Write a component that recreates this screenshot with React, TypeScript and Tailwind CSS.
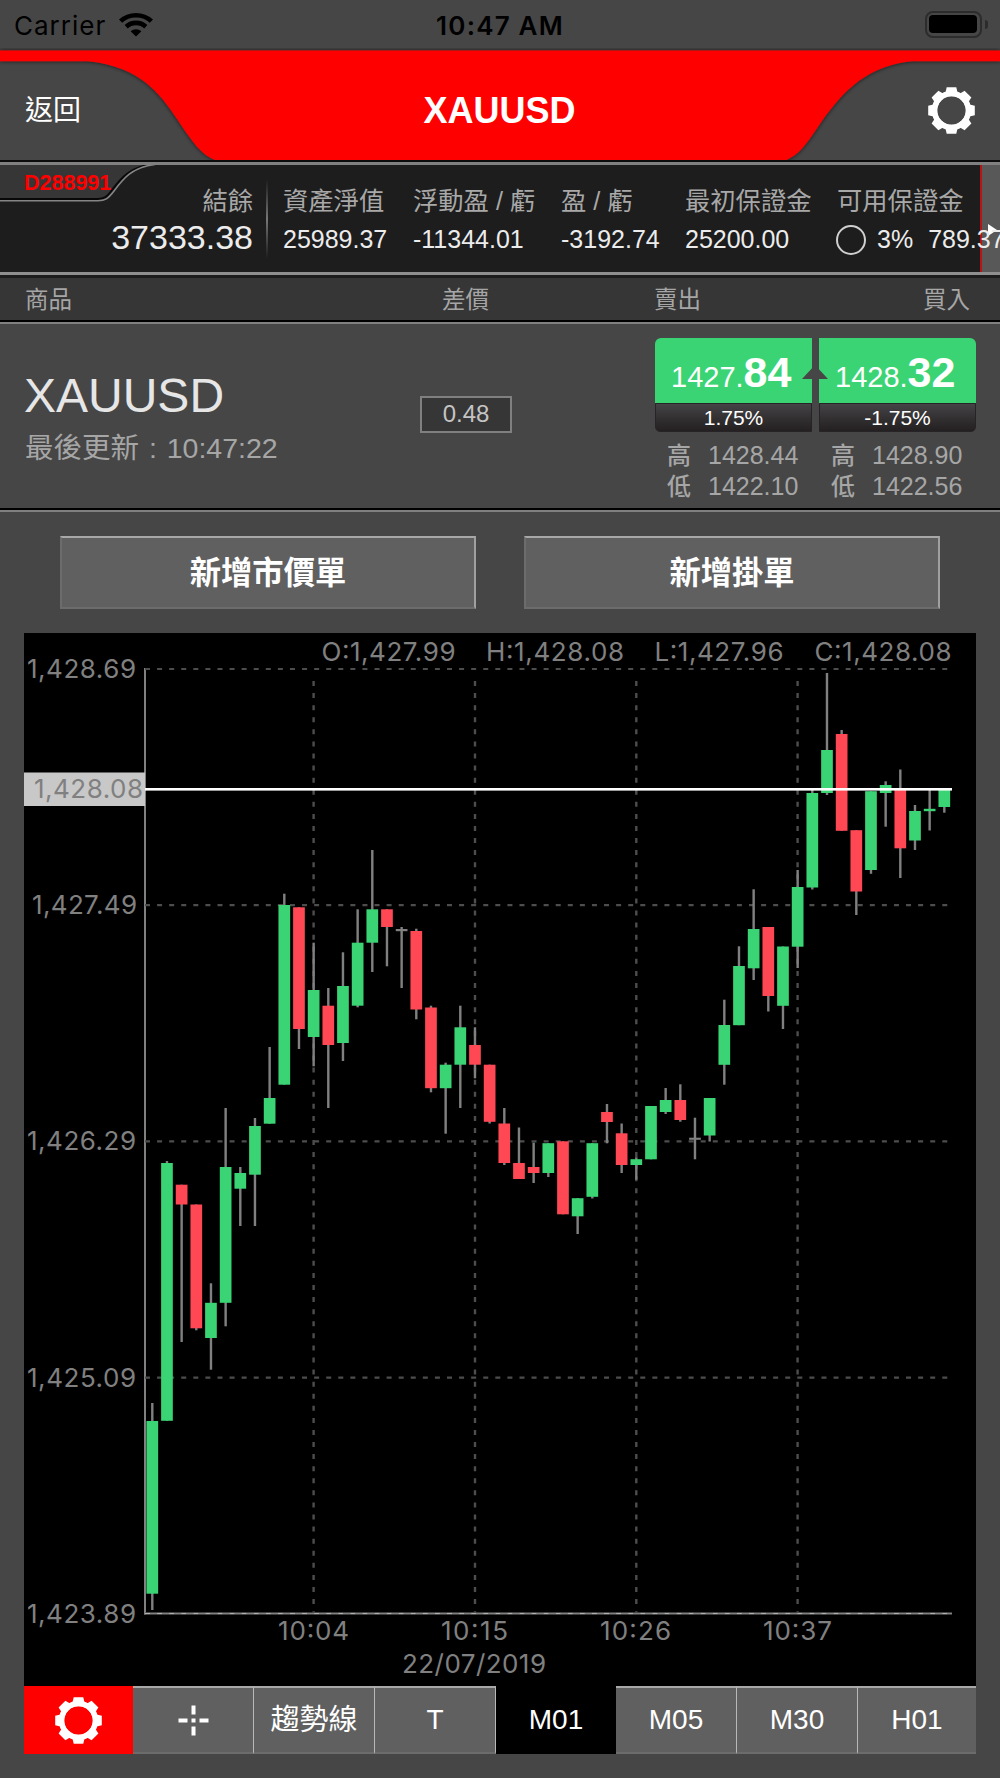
import React from "react";

type Candle = [color: "g" | "r" | "d", high: number, top: number, bottom: number, low: number];

const CANDLES: Candle[] = [
  ["g", 1403, 1421, 1593.7, 1610],
  ["g", 1161, 1163, 1420.8, 1420.8],
  ["r", 1184.7, 1184.7, 1204.5, 1342],
  ["r", 1204.5, 1204.5, 1328.3, 1330.3],
  ["g", 1283.3, 1302.8, 1338, 1369.7],
  ["g", 1108, 1167, 1302.8, 1326.3],
  ["g", 1167, 1173, 1188.7, 1226],
  ["g", 1118, 1126, 1174.7, 1226],
  ["g", 1047, 1098, 1123.7, 1123.7],
  ["g", 893.7, 905, 1084.7, 1084.7],
  ["r", 907.3, 907.3, 1029, 1049],
  ["g", 942.7, 990, 1037, 1066.3],
  ["r", 988, 1005.7, 1045, 1108],
  ["g", 952.3, 986, 1043, 1061],
  ["g", 909.3, 942.7, 1005.7, 1007.3],
  ["g", 850, 909.3, 942.7, 972],
  ["r", 909.3, 909.3, 927, 966.3],
  ["d", 927, 929, 931.2, 988],
  ["r", 928.7, 931, 1009.5, 1019.3],
  ["r", 1005.7, 1007.5, 1088.2, 1092.3],
  ["g", 1062.7, 1064.7, 1088.2, 1133.7],
  ["g", 1005.7, 1027.3, 1064.7, 1108],
  ["r", 1027.3, 1045, 1064.7, 1078.3],
  ["r", 1064.7, 1064.7, 1121.8, 1123.5],
  ["r", 1108, 1123.5, 1163, 1165],
  ["r", 1127.5, 1163, 1179, 1179],
  ["r", 1142.7, 1167, 1173, 1183],
  ["g", 1143.2, 1143.2, 1173, 1177],
  ["r", 1141.3, 1141.3, 1214.3, 1214.3],
  ["g", 1198.2, 1198.2, 1216.3, 1234],
  ["g", 1143.2, 1143.2, 1196.8, 1198.5],
  ["r", 1104, 1112, 1122, 1143.3],
  ["r", 1123.5, 1133.3, 1165, 1173],
  ["g", 1157.3, 1159.2, 1165, 1179.7],
  ["g", 1106, 1106, 1159.3, 1159.3],
  ["g", 1088, 1100, 1112, 1114],
  ["r", 1084.3, 1100, 1120, 1121.7],
  ["d", 1117.7, 1137.7, 1139.8, 1159.3],
  ["g", 1098, 1098, 1135.5, 1141.5],
  ["g", 999.7, 1025, 1064.8, 1084.7],
  ["g", 946.3, 966, 1025.2, 1025.2],
  ["g", 889.3, 929, 968.3, 980],
  ["r", 927, 927, 996, 1011.5],
  ["g", 946.5, 946.5, 1005.8, 1029],
  ["g", 870, 887, 946.7, 968],
  ["g", 790, 793, 887.5, 889.5],
  ["g", 673, 750, 793, 795],
  ["r", 730, 734, 830.8, 830.8],
  ["r", 830.2, 830.2, 891.5, 915],
  ["g", 791.2, 791.2, 870, 873.8],
  ["g", 781.3, 785, 793, 826.7],
  ["r", 769.5, 789.5, 848.3, 878],
  ["g", 805, 811, 840.5, 850],
  ["g", 790, 808.8, 811.2, 830.5],
  ["g", 789.5, 789.5, 807, 812.7],
];

const FILL = { g: "#3ad474", r: "#ff4854", d: "#808080" };

const PRICE_LABELS = [
  { t: "1,428.69", y: 669, x: 27, w: 109 },
  { t: "1,427.49", y: 905.2, x: 32, w: 105 },
  { t: "1,426.29", y: 1141.4, x: 27, w: 109 },
  { t: "1,425.09", y: 1377.6, x: 27, w: 109 },
  { t: "1,423.89", y: 1613.5, x: 27, w: 109 },
];
const TIME_LABELS = [
  { t: "10:04", line: 313.6, x: 278, w: 71 },
  { t: "10:15", line: 475, x: 441, w: 67 },
  { t: "10:26", line: 636.3, x: 600, w: 71 },
  { t: "10:37", line: 797.6, x: 763, w: 69 },
];
const OHLC = [
  { t: "O:1,427.99", x: 321.5, w: 134 },
  { t: "H:1,428.08", x: 486, w: 138 },
  { t: "L:1,427.96", x: 654.5, w: 129 },
  { t: "C:1,428.08", x: 814.5, w: 137 },
];

function Label({ t, x, y, w }: { t: string; x: number; y: number; w: number }) {
  return (
    <text x={x} y={y} textLength={w} fontSize="26" fill="#808080">
      {t}
    </text>
  );
}

function Chart() {
  return (
    <svg className="block h-[1053px] w-[952px] font-['Inter',sans-serif] font-normal" viewBox="24 633 952 1053">
      <rect x="24" y="633" width="952" height="1053" fill="#000" />
      <rect x="144" y="668" width="2" height="946.5" fill="#808080" />
      <rect x="144" y="1612.5" width="808" height="2" fill="#808080" />
      {PRICE_LABELS.map((p) => (
        <line key={p.t} x1="145" x2="950" y1={p.y} y2={p.y} stroke="#4d4d4d" strokeWidth="2.2" strokeDasharray="5 7.08" />
      ))}
      <line x1="145" x2="952" y1="1613.5" y2="1613.5" stroke="#b0b0b0" strokeWidth="1" strokeDasharray="5 7.08" />
      {TIME_LABELS.map((p) => (
        <line key={p.t} x1={p.line} x2={p.line} y1="681" y2="1613" stroke="#4d4d4d" strokeWidth="2.4" strokeDasharray="5 7.08" />
      ))}
      {CANDLES.map(([c, high, top, bottom, low], i) => {
        const cx = 152.3 + i * 14.667;
        return (
          <g key={i}>
            <rect x={cx - 1.2} y={high} width="2.4" height={low - high} fill="#808080" />
            <rect x={cx - 5.85} y={top} width="11.7" height={bottom - top} fill={FILL[c]} />
          </g>
        );
      })}
      <rect x="144" y="788" width="808" height="2.6" fill="#fff" />
      <rect x="24" y="772.5" width="121" height="33.5" fill="#c8c8c8" />
      <Label t="1,428.08" x={34} y={798} w={109} />
      {PRICE_LABELS.map((p) => (
        <Label key={p.t} t={p.t} x={p.x} y={p.y + 9} w={p.w} />
      ))}
      {OHLC.map((p) => (
        <Label key={p.t} t={p.t} x={p.x} y={661.3} w={p.w} />
      ))}
      {TIME_LABELS.map((p) => (
        <Label key={p.t} t={p.t} x={p.x} y={1639.5} w={p.w} />
      ))}
      <Label t="22/07/2019" x={402} y={1673} w={144} />
    </svg>
  );
}

function Gear() {
  return (
    <svg className="size-[47px]" viewBox="-23.5 -23.5 47 47">
      {[0, 45, 90, 135].map((a) => (
        <path key={a} d="M-6 -18 L-4.8 -23.3 H4.8 L6 -18 V18 L4.8 23.3 H-4.8 L-6 18 Z" fill="#fff" transform={`rotate(${a})`} mask="url(#gear-hole)" />
      ))}
      <mask id="gear-hole" maskUnits="userSpaceOnUse" x="-24" y="-24" width="48" height="48">
        <rect x="-24" y="-24" width="48" height="48" fill="#fff" />
        <circle r="14.3" fill="#000" />
      </mask>
      <circle r="17" fill="none" stroke="#fff" strokeWidth="5.4" />
    </svg>
  );
}

function StatusBar() {
  return (
    <div className="grid h-12 shrink-0 grid-cols-3 items-center bg-[#464646] pr-3 pl-[14px] font-['Inter',sans-serif] text-[26px] leading-none text-black">
      <div className="flex items-center gap-[13px] pt-1">
        <span className="tracking-[1px]">Carrier</span>
        <svg className="-mt-1 h-[25px] w-[34px]" viewBox="0 0 34 25" fill="none" stroke="#000" strokeWidth="4.6">
          <path d="M1.6 9.2 C10 1.2 24 1.2 32.4 9.2" />
          <path d="M7.2 14.7 C12.7 9.6 21.3 9.6 26.8 14.7" />
          <path d="M17 24.6 L11.6 19.3 C14.7 16.5 19.3 16.5 22.4 19.3 Z" fill="#000" stroke="none" />
        </svg>
      </div>
      <div className="pt-1 pr-[2px] text-center font-semibold tracking-[1.2px] whitespace-nowrap">10:47 AM</div>
      <div className="flex items-center justify-end gap-[3px]">
        <div className="h-[27px] w-[57px] rounded-[8px] border-2 border-[#2c2c2c] p-[2.5px]">
          <div className="h-full rounded-[4px] bg-black" />
        </div>
        <div className="h-[9px] w-[3px] rounded-r-full bg-[#2c2c2c]" />
      </div>
    </div>
  );
}

function Header() {
  return (
    <div className="relative flex h-[114px] shrink-0 items-center justify-between bg-[#464646] pr-[25px] pl-[25px]">
      <svg className="absolute inset-0 h-[114px] w-[1000px]" viewBox="0 48 1000 114">
        <defs>
          <filter id="shade" x="-2%" y="-10%" width="104%" height="120%">
            <feDropShadow dx="0" dy="0" stdDeviation="2.2" floodColor="#000" floodOpacity="0.75" />
          </filter>
        </defs>
        <path
          filter="url(#shade)"
          fill="#f00"
          d="M0 50.5 H1000 V61.3 H912 C868 66 845 89 822 121 C806 145 799 155 785 160.5 H216 C201 155 192 141 181 125 C163 98 144 67 88 61.3 H0 Z"
        />
        <rect x="0" y="160" width="1000" height="2" fill="#0c0c0c" />
      </svg>
      <span className="relative pt-[11px] text-[28px] leading-none text-white">返回</span>
      <span className="relative mr-[10px] pt-[11px] text-[36px] leading-none font-bold text-white">XAUUSD</span>
      <div className="relative pt-[11px]">
        <Gear />
      </div>
    </div>
  );
}

function Stat({ label, value }: { label: string; value: string }) {
  return (
    <div>
      <div className="h-[37px] text-[25.3px] leading-[37px] text-[#a8a8a8]">{label}</div>
      <div className="h-[40px] text-[25px] leading-[39px] text-[#ececec]">{value}</div>
    </div>
  );
}

function AccountBar() {
  return (
    <div className="relative h-[116px] shrink-0 overflow-hidden border-t-[3px] border-t-[#808080] bg-[#1d1d1d]">
      <svg className="absolute top-0 left-0 h-10 w-[160px]" viewBox="0 165 160 40">
        <path d="M0 165 H152 C130 167 121 180 111 193 C107 199 104 200.5 98 200.5 H0 Z" fill="#363636" />
        <path d="M152 164.5 C130 167 121 178 112 190 C107 197 104 199 98 199 H0" fill="none" stroke="#080808" strokeWidth="2" />
        <path d="M155 164.5 C132 167 123 179 114 191 C108 199 105 200.7 98 200.7 H0" fill="none" stroke="#858585" strokeWidth="1.6" />
      </svg>
      <div className="absolute top-0 right-0 h-[107px] w-[20px] border-l-2 border-l-[#b61414] bg-[#585858]">
        <div className="mt-[59px] ml-[6px] h-0 w-0 border-y-[6px] border-l-[9px] border-y-transparent border-l-white" />
      </div>
      <div className="relative grid h-[107px] grid-cols-[253px_30px_130px_148px_124px_152px_200px] whitespace-nowrap">
        <div className="text-right">
          <div className="pt-[7px] pl-[24px] text-left text-[21.5px] leading-[22px] font-bold text-[#f00]">D288991</div>
          <div className="-mt-[11px] h-[37px] text-[25.3px] leading-[37px] text-[#a8a8a8]">結餘</div>
          <div className="-mt-px text-[34px] leading-[37px] text-[#ececec]">37333.38</div>
        </div>
        <div className="flex justify-center pt-[14px]">
          <div className="-ml-[3px] h-[80px] w-[2px] bg-linear-to-b from-[#1d1d1d] via-[#777] to-[#1d1d1d]" />
        </div>
        <div className="pt-[18px]"><Stat label="資產淨值" value="25989.37" /></div>
        <div className="pt-[18px]"><Stat label="浮動盈 / 虧" value="-11344.01" /></div>
        <div className="pt-[18px]"><Stat label="盈 / 虧" value="-3192.74" /></div>
        <div className="pt-[18px]"><Stat label="最初保證金" value="25200.00" /></div>
        <div className="pt-[18px]">
          <div className="h-[37px] text-[25.3px] leading-[37px] text-[#a8a8a8]">可用保證金</div>
          <div className="flex h-[37px] items-center text-[25px] leading-[39px] text-[#ececec]">
            <span className="mt-0.5 -ml-px size-[30px] rounded-full border-2 border-[#d0d0d0]" />
            <span className="pt-[2px] pl-[11px]">3%</span>
            <span className="pt-[2px] pl-[15px]">789.37</span>
          </div>
        </div>
      </div>
      <div className="h-[3px] bg-[#8f8f8f]" />
      <div className="h-[3px] bg-[#1c1c1c]" />
    </div>
  );
}

function QuoteBox({ side, whole, frac, pct, high, low }: { side: "l" | "r"; whole: string; frac: string; pct: string; high: string; low: string }) {
  return (
    <div className="w-[157px]">
      <div className={side === "l" ? "h-[65px] rounded-tl-[6px] bg-[#3ad474]" : "h-[65px] rounded-tr-[6px] bg-[#3ad474]"}>
        <div className="flex items-baseline pt-[12px] pl-[16px] text-white">
          <span className="text-[29px] leading-[44px]">{whole}</span>
          <span className="text-[43px] leading-[44px] font-bold">{frac}</span>
        </div>
      </div>
      <div
        className={
          side === "l"
            ? "h-[29px] rounded-bl-[5px] border border-[#262426] bg-linear-to-b from-[#444345] to-[#242022] text-center text-[21px] leading-[27px] text-white"
            : "h-[29px] rounded-br-[5px] border border-[#262426] bg-linear-to-b from-[#444345] to-[#242022] text-center text-[21px] leading-[27px] text-white"
        }
      >
        {pct}
      </div>
      <div className="mt-[7.5px] grid grid-cols-[41px_auto] pl-[12px] text-[25px] leading-[31.5px] text-[#a6a6a6]">
        <span className="text-[24px] font-medium">高</span>
        <span>{high}</span>
        <span className="text-[24px] font-medium">低</span>
        <span>{low}</span>
      </div>
    </div>
  );
}

function QuoteRow() {
  return (
    <div className="flex h-[186px] shrink-0 border-t-2 border-t-[#808080] bg-[#464646] pr-6 pl-[25px]">
      <div className="w-[395px]">
        <div className="-ml-px pt-[44px] text-[48px] leading-[56px] text-[#e6e6e6]">XAUUSD</div>
        <div className="pt-[2px] text-[28.5px] leading-[44px] text-[#a6a6a6] [word-spacing:2px]">
          最後更新 : 10:47:22
        </div>
      </div>
      <div className="mt-[72px] h-[37px] w-[92px] border-2 border-[#808080] bg-[#363636] text-center text-[24px] leading-[31px] text-[#c4c4c4]">0.48</div>
      <div className="relative mt-[14px] ml-auto flex gap-[7px]">
        <QuoteBox side="l" whole="1427." frac="84" pct="1.75%" high="1428.44" low="1422.10" />
        <QuoteBox side="r" whole="1428." frac="32" pct="-1.75%" high="1428.90" low="1422.56" />
        <div className="absolute top-[27px] left-[147px] h-0 w-0 border-x-[13px] border-b-[14px] border-x-transparent border-b-[#464646]" />
      </div>
    </div>
  );
}

const EDGE = "border-t-2 border-r-2 border-b-2 border-l-2 border-t-[#a8a8a8] border-r-[#a0a0a0] border-b-[#6c6c6c] border-l-[#6c6c6c] bg-[#606060]";

function Tab({ children, className }: { children: React.ReactNode; className: string }) {
  return <div className={`flex items-center justify-center text-[28px] text-white ${className}`}>{children}</div>;
}

const TAB = "border-t-2 border-r border-b-2 border-t-[#a8a8a8] border-r-[#b8b8b8] border-b-[#6c6c6c] bg-[#606060]";

function Toolbar() {
  return (
    <div className="grid h-[68px] grid-cols-[109px_121px_121px_121px_120px_121px_121px_118px]">
      <div className="flex items-center justify-center bg-[#f00]"><Gear /></div>
      <Tab className={TAB}>
        <svg className="h-[31px] w-[31px]" viewBox="0 0 31 31" stroke="#fff" strokeWidth="4">
          <path d="M15.5 0.5 V9.5 M15.5 13.5 V17.5 M15.5 21.5 V30.5 M0.5 15.5 H9.5 M21.5 15.5 H30.5" />
        </svg>
      </Tab>
      <Tab className={TAB}><span className="pt-[2px] text-[29px]">趨勢線</span></Tab>
      <Tab className={TAB}>T</Tab>
      <Tab className="bg-black">M01</Tab>
      <Tab className={TAB}>M05</Tab>
      <Tab className={TAB}>M30</Tab>
      <Tab className="border-t-2 border-b-2 border-t-[#a8a8a8] border-b-[#6c6c6c] bg-[#606060]">H01</Tab>
    </div>
  );
}

export default function App() {
  return (
    <div className="flex h-[1778px] w-[1000px] flex-col overflow-hidden bg-[#464646] font-['Liberation_Sans','Noto_Sans_CJK_TC',sans-serif]">
      <StatusBar />
      <Header />
      <AccountBar />
      <div className="flex h-[44px] shrink-0 items-center border-b-2 border-b-black bg-[#363636] pt-[4px] pr-[30px] pl-[25px] text-[23.5px] leading-none text-[#a6a6a6]">
        <span className="w-[417px]">商品</span>
        <span className="w-[212px]">差價</span>
        <span>賣出</span>
        <span className="ml-auto">買入</span>
      </div>
      <QuoteRow />
      <div className="h-[2px] shrink-0 bg-black" />
      <div className="h-[2px] shrink-0 bg-[#808080]" />
      <div className="flex shrink-0 gap-12 px-[60px] pt-[24px] text-[31.3px] font-bold text-white">
        <div className={`flex h-[73px] flex-1 items-center justify-center pt-[4px] ${EDGE}`}>新增市價單</div>
        <div className={`flex h-[73px] flex-1 items-center justify-center pt-[4px] ${EDGE}`}>新增掛單</div>
      </div>
      <div className="mx-6 mt-6 shrink-0">
        <Chart />
        <Toolbar />
      </div>
    </div>
  );
}
